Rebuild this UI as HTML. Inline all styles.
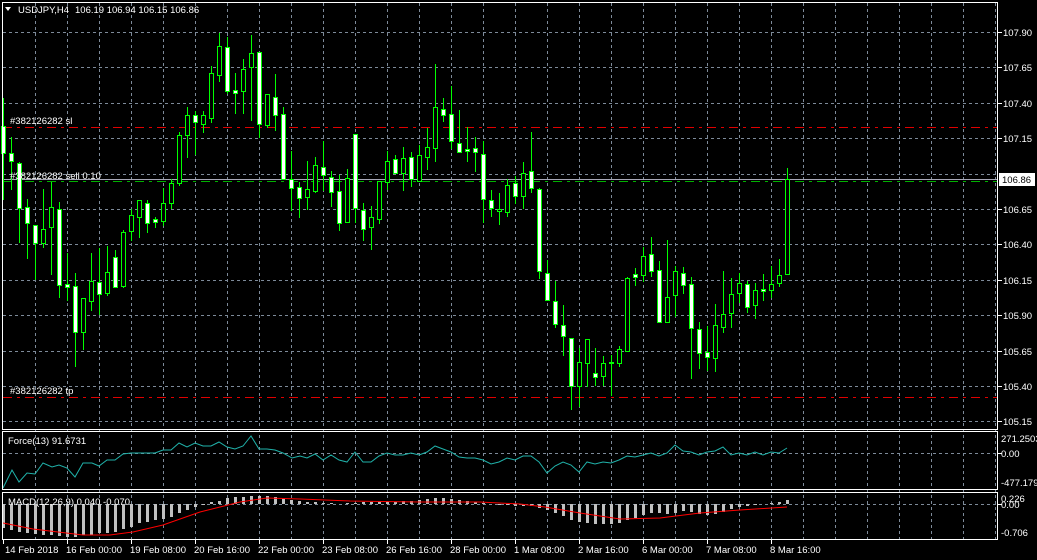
<!DOCTYPE html>
<html><head><meta charset="utf-8"><style>
html,body{margin:0;padding:0;background:#000;}
svg{display:block;}
text{font-family:"Liberation Sans",sans-serif;font-size:9.5px;fill:#fff;}
</style></head><body>
<svg width="1037" height="560" viewBox="0 0 1037 560" xmlns="http://www.w3.org/2000/svg">
<rect width="1037" height="560" fill="#000"/>
<g stroke="#7d8a99" stroke-width="1" stroke-dasharray="3,3" shape-rendering="crispEdges">
<path d="M3 32.5H997M3 67.5H997M3 103.5H997M3 138.5H997M3 174.5H997M3 209.5H997M3 244.5H997M3 280.5H997M3 315.5H997M3 351.5H997M3 386.5H997M3 421.5H997"/>
<path d="M3 453.5H997M3 504.5H997"/>
<path d="M35.5 3V539M67.5 3V539M99.5 3V539M131.5 3V539M163.5 3V539M195.5 3V539M227.5 3V539M259.5 3V539M291.5 3V539M323.5 3V539M355.5 3V539M387.5 3V539M419.5 3V539M451.5 3V539M483.5 3V539M515.5 3V539M547.5 3V539M579.5 3V539M611.5 3V539M643.5 3V539M675.5 3V539M707.5 3V539M739.5 3V539M771.5 3V539M803.5 3V539M835.5 3V539M867.5 3V539M899.5 3V539M931.5 3V539M963.5 3V539M995.5 3V539"/>
</g>
<g shape-rendering="crispEdges">
<line x1="3" y1="127.5" x2="997" y2="127.5" stroke="#e00000" stroke-dasharray="9,5,3,5"/>
<line x1="3" y1="397.5" x2="997" y2="397.5" stroke="#e00000" stroke-dasharray="9,5,3,5"/>
<line x1="3" y1="181.5" x2="997" y2="181.5" stroke="#00b000" stroke-dasharray="9,5,3,5"/>
<line x1="3" y1="179.5" x2="997" y2="179.5" stroke="#a8a8b8"/>
</g>
<g stroke="#00ff00" stroke-width="1" shape-rendering="crispEdges">
<path d="M3.5 98V200M11.5 137V190M19.5 162V243M27.5 199V259M35.5 225V280M43.5 189V248M51.5 182V275M59.5 202V298M67.5 253V301M75.5 273V367M83.5 298V350M91.5 253V311M99.5 248V315M107.5 246V296M115.5 250V288M123.5 230V288M131.5 209V241M139.5 200V238M147.5 200V233M155.5 217V228M163.5 188V226M171.5 179V209M179.5 132V186M187.5 107V158M195.5 111V155M203.5 111V133M211.5 66V123M219.5 33V82M227.5 37V94M235.5 73V114M243.5 59V114M251.5 35V121M259.5 52V138M267.5 94V128M275.5 74V131M283.5 107V179M291.5 151V211M299.5 182V218M307.5 161V210M315.5 157V193M323.5 141V191M331.5 171V207M339.5 175V231M347.5 169V222M355.5 134V223M363.5 203V241M371.5 206V250M379.5 181V224M387.5 151V190M395.5 155V174M403.5 147V191M411.5 152V187M419.5 145V181M427.5 128V170M435.5 64V162M443.5 98V122M451.5 86V149M459.5 110V152M467.5 127V162M475.5 137V172M483.5 141V223M491.5 190V217M499.5 193V225M507.5 179V217M515.5 176V204M523.5 162V209M531.5 132V193M539.5 188V279M547.5 260V300M555.5 281V328M563.5 305V356M571.5 338V410M579.5 348V407M587.5 339V387M595.5 348V386M603.5 356V386M611.5 355V396M619.5 346V367M627.5 277V351M635.5 268V286M643.5 247V282M651.5 237V277M659.5 261V322M667.5 240V322M675.5 266V317M683.5 267V294M691.5 277V379M699.5 322V369M707.5 326V371M715.5 304V372M723.5 271V333M731.5 278V328M739.5 273V303M747.5 281V313M755.5 283V319M763.5 274V301M771.5 266V298M779.5 259V287M787.5 168V274"/>
<g fill="#fff">
<rect x="1.5" y="126.5" width="4" height="27"/><rect x="9.5" y="153.5" width="4" height="8"/><rect x="17.5" y="163.5" width="4" height="45"/><rect x="25.5" y="207.5" width="4" height="16"/><rect x="33.5" y="225.5" width="4" height="18"/><rect x="57.5" y="209.5" width="4" height="76"/><rect x="65.5" y="284.5" width="4" height="3"/><rect x="73.5" y="286.5" width="4" height="46"/><rect x="97.5" y="282.5" width="4" height="12"/><rect x="113.5" y="257.5" width="4" height="30"/><rect x="145.5" y="203.5" width="4" height="20"/><rect x="153.5" y="219.5" width="4" height="3"/><rect x="193.5" y="115.5" width="4" height="7"/><rect x="225.5" y="47.5" width="4" height="44"/><rect x="233.5" y="90.5" width="4" height="3"/><rect x="257.5" y="52.5" width="4" height="72"/><rect x="273.5" y="97.5" width="4" height="18"/><rect x="281.5" y="114.5" width="4" height="65"/><rect x="289.5" y="179.5" width="4" height="9"/><rect x="297.5" y="187.5" width="4" height="11"/><rect x="321.5" y="167.5" width="4" height="8"/><rect x="329.5" y="177.5" width="4" height="15"/><rect x="337.5" y="191.5" width="4" height="32"/><rect x="353.5" y="134.5" width="4" height="74"/><rect x="361.5" y="210.5" width="4" height="19"/><rect x="393.5" y="159.5" width="4" height="14"/><rect x="409.5" y="157.5" width="4" height="22"/><rect x="441.5" y="109.5" width="4" height="6"/><rect x="449.5" y="114.5" width="4" height="27"/><rect x="457.5" y="143.5" width="4" height="9"/><rect x="465.5" y="149.5" width="4" height="2"/><rect x="473.5" y="148.5" width="4" height="4"/><rect x="481.5" y="154.5" width="4" height="45"/><rect x="489.5" y="200.5" width="4" height="8"/><rect x="513.5" y="183.5" width="4" height="13"/><rect x="529.5" y="171.5" width="4" height="17"/><rect x="537.5" y="189.5" width="4" height="82"/><rect x="545.5" y="273.5" width="4" height="27"/><rect x="553.5" y="301.5" width="4" height="23"/><rect x="561.5" y="325.5" width="4" height="11"/><rect x="569.5" y="338.5" width="4" height="48"/><rect x="593.5" y="373.5" width="4" height="4"/><rect x="633.5" y="274.5" width="4" height="3"/><rect x="649.5" y="254.5" width="4" height="17"/><rect x="657.5" y="270.5" width="4" height="52"/><rect x="681.5" y="273.5" width="4" height="12"/><rect x="689.5" y="284.5" width="4" height="44"/><rect x="697.5" y="329.5" width="4" height="24"/><rect x="705.5" y="352.5" width="4" height="5"/><rect x="745.5" y="284.5" width="4" height="23"/><rect x="761.5" y="289.5" width="4" height="2"/>
</g>
<g fill="#000">
<rect x="41.5" y="229.5" width="4" height="14"/><rect x="49.5" y="207.5" width="4" height="20"/><rect x="81.5" y="298.5" width="4" height="34"/><rect x="89.5" y="281.5" width="4" height="20"/><rect x="105.5" y="272.5" width="4" height="21"/><rect x="121.5" y="232.5" width="4" height="54"/><rect x="129.5" y="215.5" width="4" height="16"/><rect x="137.5" y="200.5" width="4" height="17"/><rect x="161.5" y="203.5" width="4" height="18"/><rect x="169.5" y="183.5" width="4" height="20"/><rect x="177.5" y="135.5" width="4" height="48"/><rect x="185.5" y="115.5" width="4" height="20"/><rect x="201.5" y="115.5" width="4" height="9"/><rect x="209.5" y="73.5" width="4" height="45"/><rect x="217.5" y="46.5" width="4" height="29"/><rect x="241.5" y="69.5" width="4" height="22"/><rect x="249.5" y="53.5" width="4" height="14"/><rect x="265.5" y="94.5" width="4" height="31"/><rect x="305.5" y="189.5" width="4" height="8"/><rect x="313.5" y="165.5" width="4" height="26"/><rect x="345.5" y="178.5" width="4" height="44"/><rect x="369.5" y="217.5" width="4" height="10"/><rect x="377.5" y="181.5" width="4" height="38"/><rect x="385.5" y="161.5" width="4" height="21"/><rect x="401.5" y="158.5" width="4" height="15"/><rect x="417.5" y="155.5" width="4" height="26"/><rect x="425.5" y="147.5" width="4" height="10"/><rect x="433.5" y="107.5" width="4" height="41"/><rect x="497.5" y="209.5" width="4" height="2"/><rect x="505.5" y="185.5" width="4" height="27"/><rect x="521.5" y="173.5" width="4" height="23"/><rect x="577.5" y="362.5" width="4" height="24"/><rect x="585.5" y="339.5" width="4" height="24"/><rect x="601.5" y="363.5" width="4" height="13"/><rect x="609.5" y="362.5" width="4" height="1"/><rect x="617.5" y="349.5" width="4" height="14"/><rect x="625.5" y="278.5" width="4" height="73"/><rect x="641.5" y="256.5" width="4" height="19"/><rect x="665.5" y="297.5" width="4" height="25"/><rect x="673.5" y="271.5" width="4" height="24"/><rect x="713.5" y="325.5" width="4" height="33"/><rect x="721.5" y="314.5" width="4" height="13"/><rect x="729.5" y="294.5" width="4" height="19"/><rect x="737.5" y="283.5" width="4" height="10"/><rect x="753.5" y="290.5" width="4" height="15"/><rect x="769.5" y="284.5" width="4" height="6"/><rect x="777.5" y="275.5" width="4" height="8"/><rect x="785.5" y="179.5" width="4" height="95"/>
</g>
</g>
<polyline fill="none" stroke="#20b2aa" stroke-width="1" points="3,488 12,470 19,482 27,473 35,474 43,463 52,467 59,465 67,468 75,477 83,463 92,463 99,466 107,460 115,460 123,454 131,453 139,453 147,453 155,453 163,450 171,450 179,443 187,447 195,443 203,446 211,446 219,442 227,447 235,449 243,446 251,436 259,449 267,449 275,450 283,453 292,458 300,456 307,458 315,454 323,460 331,455 339,460 347,462 355,452 363,462 371,462 379,456 387,453 395,455 403,455 411,453 419,455 427,452 435,446 443,449 451,452 459,457 467,458 475,458 483,460 491,464 499,462 507,458 515,460 523,456 531,456 539,462 547,473 555,466 563,462 571,465 579,472 587,462 595,464 603,462 611,463 619,460 627,456 635,457 643,455 651,453 659,456 667,453 675,445 683,451 691,452 699,455 707,452 715,451 723,447 731,455 739,453 747,455 755,452 763,455 771,452 779,453 787,448"/>
<g stroke="#c0c0c0" stroke-width="3" shape-rendering="crispEdges">
<path d="M3.5 504V528M11.5 504V530M19.5 504V532M27.5 504V533M35.5 504V534M43.5 504V535M51.5 504V535M59.5 504V536M67.5 504V537M75.5 504V537M83.5 504V535M91.5 504V535M99.5 504V533M107.5 504V533M115.5 504V532M123.5 504V529M131.5 504V527M139.5 504V523M147.5 504V522M155.5 504V520M163.5 504V519M171.5 504V517M179.5 504V513M187.5 504V510M195.5 504V507M203.5 504V505M211.5 504V502M219.5 504V501M227.5 504V498M235.5 504V497M243.5 504V497M251.5 504V496M259.5 504V496M267.5 504V496M275.5 504V497M283.5 504V499M291.5 504V500M299.5 504V501M307.5 504V502M315.5 504V502M323.5 504V503M331.5 504V503M347.5 504V503M355.5 504V503M363.5 504V502M371.5 504V502M379.5 504V502M387.5 504V502M395.5 504V502M403.5 504V501M411.5 504V501M419.5 504V500M427.5 504V499M435.5 504V498M443.5 504V498M451.5 504V499M459.5 504V500M467.5 504V501M475.5 504V502M483.5 504V503M499.5 504V505M507.5 504V505M515.5 504V506M523.5 504V506M531.5 504V506M539.5 504V508M547.5 504V510M555.5 504V513M563.5 504V516M571.5 504V520M579.5 504V522M587.5 504V523M595.5 504V524M603.5 504V524M611.5 504V524M619.5 504V523M627.5 504V520M635.5 504V518M643.5 504V515M651.5 504V513M659.5 504V513M667.5 504V514M675.5 504V513M683.5 504V511M691.5 504V512M699.5 504V514M707.5 504V515M715.5 504V514M723.5 504V512M731.5 504V509M739.5 504V507M747.5 504V506M755.5 504V505M771.5 504V503M779.5 504V502M787.5 504V500"/>
</g>
<polyline fill="none" stroke="#ff0000" stroke-width="1" points="3,523 33,529 83,535 110,535 133,532 163,525 200,512 240,502 267,498 300,499 350,501 420,502 480,502 520,504 545,507 580,513 620,519 660,518 700,513 740,510 787,507"/>
<g fill="none" stroke="#fff" stroke-width="1" shape-rendering="crispEdges">
<rect x="2.5" y="2.5" width="995" height="427"/>
<rect x="2.5" y="431.5" width="995" height="58"/>
<rect x="2.5" y="492.5" width="995" height="47"/>
</g>
<g stroke="#fff" shape-rendering="crispEdges">
<path d="M998 32.5h4M998 67.5h4M998 103.5h4M998 138.5h4M998 209.5h4M998 244.5h4M998 280.5h4M998 315.5h4M998 351.5h4M998 386.5h4M998 421.5h4M998 453.5h4M998 504.5h4"/>
<path d="M3.5 540v4M67.5 540v4M131.5 540v4M195.5 540v4M259.5 540v4M323.5 540v4M387.5 540v4M451.5 540v4M515.5 540v4M579.5 540v4M643.5 540v4M707.5 540v4M771.5 540v4"/>
</g>
<polygon points="5,7 11,7 8,11" fill="#fff"/>
<text x="18" y="13">USDJPY,H4</text>
<text x="75" y="13">106.19 106.94 106.15 106.86</text>
<text x="10" y="124">#382126282 sl</text>
<text x="10" y="179">#382126282 sell 0.10</text>
<text x="10" y="394">#382126282 tp</text>
<text x="8" y="444">Force(13) 91.6731</text>
<text x="8" y="505">MACD(12,26,9) 0.040 -0.070</text>
<text x="1003" y="36">107.90</text>
<text x="1003" y="71">107.65</text>
<text x="1003" y="107">107.40</text>
<text x="1003" y="142">107.15</text>
<text x="1003" y="213">106.65</text>
<text x="1003" y="248">106.40</text>
<text x="1003" y="284">106.15</text>
<text x="1003" y="319">105.90</text>
<text x="1003" y="355">105.65</text>
<text x="1003" y="390">105.40</text>
<text x="1003" y="425">105.15</text>
<rect x="999" y="173" width="36" height="13" fill="#fff"/>
<text x="1002" y="183" style="fill:#000">106.86</text>
<text x="1001" y="442">271.2503</text>
<text x="1001" y="457">0.00</text>
<text x="1001" y="486">-477.179</text>
<text x="1001" y="502">0.226</text>
<text x="1001" y="508">0.00</text>
<text x="1001" y="536">-0.706</text>
<text x="5" y="553">14 Feb 2018</text>
<text x="66" y="553">16 Feb 00:00</text>
<text x="130" y="553">19 Feb 08:00</text>
<text x="194" y="553">20 Feb 16:00</text>
<text x="258" y="553">22 Feb 00:00</text>
<text x="322" y="553">23 Feb 08:00</text>
<text x="386" y="553">26 Feb 16:00</text>
<text x="450" y="553">28 Feb 00:00</text>
<text x="514" y="553">1 Mar 08:00</text>
<text x="578" y="553">2 Mar 16:00</text>
<text x="642" y="553">6 Mar 00:00</text>
<text x="706" y="553">7 Mar 08:00</text>
<text x="770" y="553">8 Mar 16:00</text>
</svg>
</body></html>
